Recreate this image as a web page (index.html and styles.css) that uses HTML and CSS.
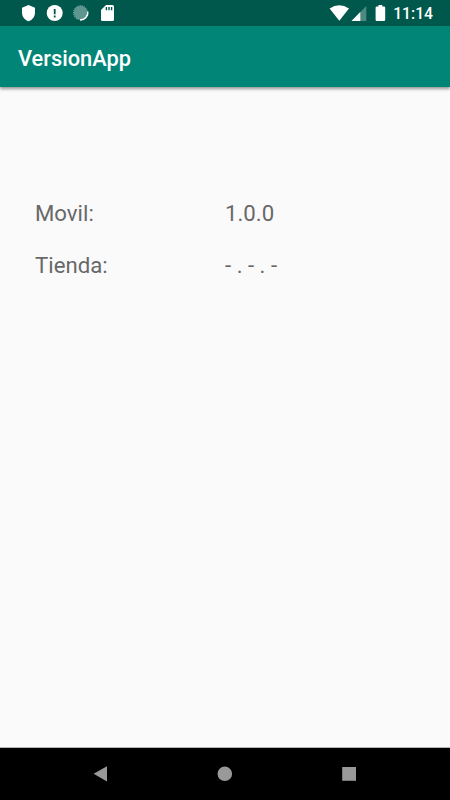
FILE: index.html
```html
<!DOCTYPE html>
<html lang="es">
<head>
  <meta charset="UTF-8">
  <title>VersionApp</title>
  <link rel="stylesheet" href="styles.css">
</head>
<body>
  <div class="status-bar">
    <svg class="icons" width="100" height="26" viewBox="20 0 100 26">
      <!-- shield -->
      <path fill="#fff" d="M28.5 5L35 7.7V12.5C35 16.5 32.3 20 28.5 21.2C24.7 20 22 16.5 22 12.5V7.7Z"/>
      <!-- alert -->
      <circle cx="54.7" cy="13" r="8" fill="#fff"/>
      <path fill="#00574b" d="M53.8 9H55.6V14.2H53.8ZM53.8 15.6H55.6V17.4H53.8Z"/>
      <!-- sync -->
      <circle cx="80.5" cy="12.7" r="6.7" fill="#5c968e"/>
      <circle cx="80.5" cy="12.7" r="6.9" fill="none" stroke="#86b0aa" stroke-width="1.1" stroke-dasharray="1.1 1"/>
      <path d="M87.8 11.5A7.3 7.3 0 0 1 80 19.9" fill="none" stroke="#fff" stroke-width="1.4"/>
      <!-- sd card -->
      <path fill="#fff" d="M106 5H112.5Q114 5 114 6.5V19.5Q114 21 112.5 21H102.5Q101 21 101 19.5V10Z"/>
      <path fill="#00574b" d="M105.7 7H107.1V10.2H105.7ZM108.3 7H109.7V10.2H108.3ZM110.9 7H112.3V10.2H110.9Z"/>
    </svg>
    <div class="status-right">
      <svg width="60" height="26" viewBox="328 0 60 26">
        <!-- wifi -->
        <path fill="#fff" d="M329.6 8.6Q339.3 1.8 349 8.6L339.3 20.7Z"/>
        <!-- signal -->
        <path fill="#4d8981" d="M366.3 6V21H351.5Z"/>
        <path fill="#fff" d="M360.3 12.1V21H351.5Z"/>
        <!-- battery -->
        <path fill="#fff" d="M378.5 5H382.3V6.5H384Q385.2 6.5 385.2 7.7V19.8Q385.2 21 384 21H376.8Q375.6 21 375.6 19.8V7.7Q375.6 6.5 376.8 6.5H378.5Z"/>
      </svg>
      <span class="time">11:14</span>
    </div>
  </div>

  <header class="app-bar">
    <h1>VersionApp</h1>
  </header>

  <main class="content">
    <div class="row">
      <span class="label">Movil:</span>
      <span>1.0.0</span>
    </div>
    <div class="row">
      <span class="label">Tienda:</span>
      <span>- . - . -</span>
    </div>
  </main>

  <nav class="nav-bar">
    <svg width="16" height="16" viewBox="0 0 16 16"><path d="M1.6 7.8L15 0.2V15.6Z"/></svg>
    <svg width="16" height="16" viewBox="0 0 16 16"><circle cx="7.8" cy="7.8" r="7.3"/></svg>
    <svg width="16" height="16" viewBox="0 0 16 16"><path d="M1.2 1H15V14.8H1.2Z"/></svg>
  </nav>
</body>
</html>
```
FILE: styles.css
```css
body {
  margin: 0;
  height: 100vh;
  display: flex;
  flex-direction: column;
  font-family: Roboto, sans-serif;
  background-color: #fafafa;
  color: #686868;
}

svg {
  display: block;
}

.status-bar {
  height: 26px;
  display: flex;
  justify-content: space-between;
  padding: 0 17px 0 20px;
  background-color: #00574b;
  color: white;
}

.status-right {
  display: flex;
  gap: 5px;
}

.time {
  font-size: 15.7px;
  font-weight: 500;
  line-height: 28px;
}

.app-bar {
  height: 61px;
  display: flex;
  align-items: center;
  padding: 0 18px;
  background-color: #008577;
  color: white;
  box-shadow: 0 2px 3px rgba(0,0,0,0.4);
}

h1 {
  margin: 0;
  padding-top: 3px;
  font-size: 21.8px;
  font-weight: 500;
}

.content {
  flex: 1;
  padding: 100px 35px 0;
}

.row {
  display: grid;
  grid-template-columns: 190px 1fr;
  height: 52px;
  line-height: 53px;
  font-size: 22.2px;
}

.nav-bar {
  height: 52px;
  box-sizing: border-box;
  display: flex;
  justify-content: space-between;
  padding: 18px 93px 0 92px;
  background-color: black;
  box-shadow: 0 -1px 0 #b4b4b4;
}

.nav-bar svg {
  fill: #999;
}
```
